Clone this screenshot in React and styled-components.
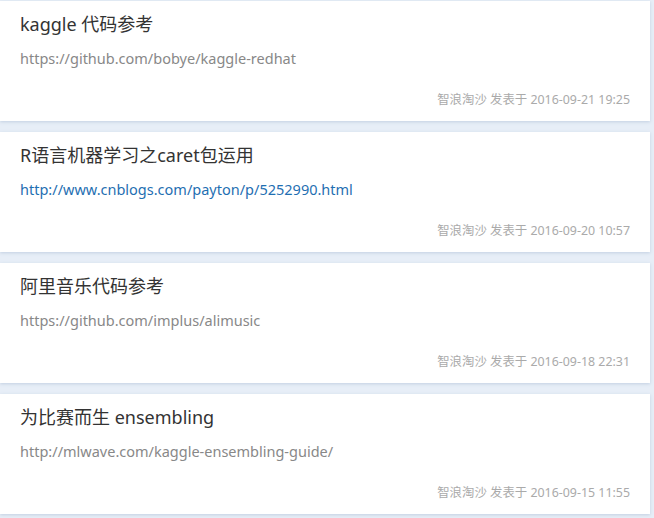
import React from "react"
import styled, { createGlobalStyle } from "styled-components"

const GlobalStyle = createGlobalStyle`
  html, body {
    margin: 0;
    padding: 0;
    background: #e7eef7;
  }
  body {
    font-family: "Noto Sans", "Noto Sans CJK SC", sans-serif;
  }
`;

const List = styled.div`
  display: flex;
  flex-direction: column;
  gap: 11px;
  padding: 1px 4px 4px 0;
`;

const Card = styled.div`
  background: #fff;
  height: 120px;
  box-sizing: border-box;
  padding: 11px 20px 0 20px;
  display: flex;
  flex-direction: column;
  box-shadow: 0 1px 3px rgba(150, 170, 200, 0.45);
`;

const Title = styled.div`
  font-size: 18px;
  line-height: 24px;
  color: #333;
`;

const Link = styled.a`
  margin-top: 12px;
  font-size: 14.5px;
  line-height: 20px;
  color: ${p => (p.$blue ? "#1f6fb2" : "#888")};
  text-decoration: none;
`;

const Meta = styled.div`
  margin-top: auto;
  margin-bottom: 13px;
  align-self: flex-end;
  font-size: 12.4px;
  line-height: 16px;
  color: #aaa;
`;

const posts = [
  { title: "kaggle 代码参考", url: "https://github.com/bobye/kaggle-redhat", time: "2016-09-21 19:25" },
  { title: "R语言机器学习之caret包运用", url: "http://www.cnblogs.com/payton/p/5252990.html", time: "2016-09-20 10:57", blue: true },
  { title: "阿里音乐代码参考", url: "https://github.com/implus/alimusic", time: "2016-09-18 22:31" },
  { title: "为比赛而生 ensembling", url: "http://mlwave.com/kaggle-ensembling-guide/", time: "2016-09-15 11:55" },
];

export default function App() {
  return (
    <>
      <GlobalStyle />
      <List>
        {posts.map(p => (
          <Card key={p.time}>
            <Title>{p.title}</Title>
            <Link href={p.url} $blue={p.blue}>{p.url}</Link>
            <Meta>智浪淘沙 发表于 {p.time}</Meta>
          </Card>
        ))}
      </List>
    </>
  )
}
